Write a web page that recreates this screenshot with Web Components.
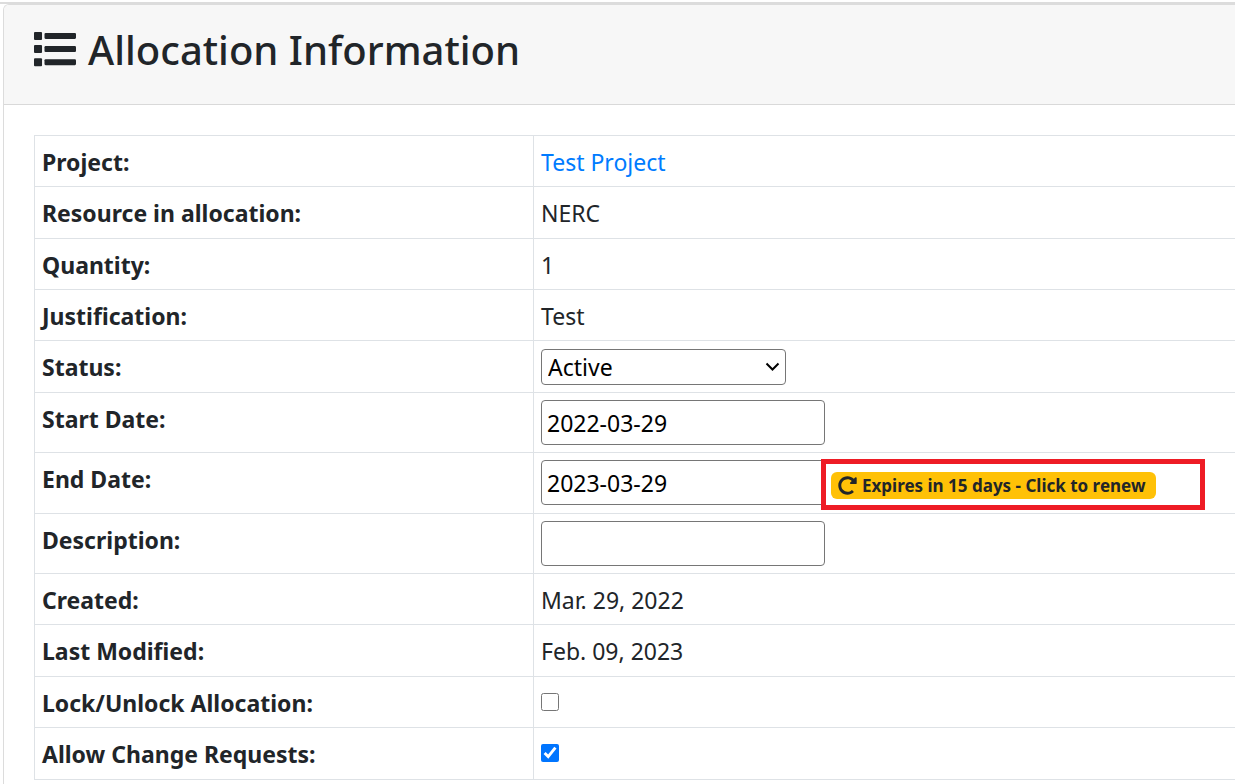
<!DOCTYPE html>
<html lang="en">
<head>
<meta charset="utf-8">
<title>Allocation Information</title>
<style>
  body {
    margin: 0;
    padding-top: 2px;
    background: #fff;
    color: #212529;
    font-family: "Noto Sans", "Open Sans", sans-serif;
    font-size: 23px;
    line-height: 38px;
    overflow-x: hidden;
  }
</style>
</head>
<body>
<info-card>
  <list-icon slot="icon"></list-icon>
  <span slot="title">Allocation Information</span>
  <allocation-details></allocation-details>
</info-card>

<script>
class ListIcon extends HTMLElement {
  constructor() {
    super();
    this.attachShadow({ mode: "open" }).innerHTML = `
      <style>
        :host { display: block; width: 42px; height: 42px; }
        svg { display: block; width: 100%; height: 100%; }
      </style>
      <svg viewBox="0 0 512 512" fill="currentColor" aria-hidden="true">
        <rect x="0" y="48" width="98" height="98" rx="12"/>
        <rect x="0" y="208" width="98" height="98" rx="12"/>
        <rect x="0" y="368" width="98" height="98" rx="12"/>
        <rect x="128" y="60" width="384" height="74" rx="14"/>
        <rect x="128" y="220" width="384" height="74" rx="14"/>
        <rect x="128" y="380" width="384" height="74" rx="14"/>
      </svg>`;
  }
}
customElements.define("list-icon", ListIcon);

class InfoCard extends HTMLElement {
  constructor() {
    super();
    this.attachShadow({ mode: "open" }).innerHTML = `
      <style>
        :host { display: block; border-top: 2px solid #dcdcdc; }
        section {
          margin-left: 3px;
          border: 1px solid #dcdcdc;
          border-right: 0;
          border-radius: 6px 0 0 0;
        }
        header {
          display: flex;
          gap: 12px;
          padding: 18px 30px 28px;
          background: #f7f7f7;
          border-bottom: 1px solid #d9d9d9;
          border-radius: 5px 0 0 0;
        }
        h2 {
          margin: 0;
          font-size: 40px;
          font-weight: 500;
          line-height: 53px;
        }
        .icon { padding-top: 5px; }
        .body { padding: 30px 0 30px 30px; }
      </style>
      <section>
        <header>
          <div class="icon"><slot name="icon"></slot></div>
          <h2><slot name="title"></slot></h2>
        </header>
        <div class="body"><slot></slot></div>
      </section>`;
  }
}
customElements.define("info-card", InfoCard);

class RenewBadge extends HTMLElement {
  constructor() {
    super();
    this.attachShadow({ mode: "open" }).innerHTML = `
      <style>
        :host { display: block; position: relative; }
        :host::after {
          content: "";
          position: absolute;
          top: -13px;
          right: -49px;
          bottom: -11px;
          left: -10px;
          border: 5px solid #ee1c25;
          pointer-events: none;
        }
        a {
          display: flex;
          align-items: center;
          gap: 5px;
          height: 27px;
          padding: 0 11px 0 7px;
          border-radius: 6px;
          background: #ffc107;
          color: #212529;
          font-size: 17px;
          font-weight: 700;
          line-height: 28px;
          text-decoration: none;
          white-space: nowrap;
        }
        svg { flex: none; width: 19px; height: 19px; }
      </style>
      <a href="#renew">
        <svg viewBox="0 0 512 512" fill="currentColor" aria-hidden="true"><path d="M256.455 8c66.269.119 126.437 26.233 170.859 68.685l35.715-35.715C478.149 25.851 504 36.559 504 57.941V192c0 13.255-10.745 24-24 24H345.941c-21.382 0-32.09-25.851-16.971-40.971l41.75-41.75c-30.864-28.899-70.801-44.907-113.23-45.273-92.398-.798-170.283 73.977-169.484 169.442C88.764 348.009 162.184 424 256 424c41.127 0 79.997-14.678 110.629-41.556 4.743-4.161 11.906-3.908 16.368.553l39.662 39.662c4.872 4.872 4.631 12.815-.482 17.433C378.202 479.813 319.926 504 256 504 119.034 504 8.001 392.967 8 256.002 7.999 119.193 119.646 7.755 256.455 8z"/></svg>
        <span><slot></slot></span>
      </a>`;
  }
}
customElements.define("renew-badge", RenewBadge);

class AllocationDetails extends HTMLElement {
  constructor() {
    super();
    this.attachShadow({ mode: "open" }).innerHTML = `
      <style>
        :host { display: block; }
        table {
          width: 100%;
          border-collapse: separate;
          border-spacing: 0;
          border: solid #dee2e6;
          border-width: 1px 0 0 1px;
          table-layout: fixed;
        }
        th, td {
          box-sizing: border-box;
          height: 51px;
          padding: 7px 7px 0;
          border-bottom: 1px solid #dee2e6;
          text-align: left;
          vertical-align: top;
        }
        th { width: 499px; border-right: 1px solid #dee2e6; font-weight: 700; }
        .tall > * { height: 60px; }
        tr:nth-child(5n) > *, tr:nth-child(5n + 2) > * { height: 52px; }
        .tall:nth-child(5n + 2) > * { height: 61px; }
        a { color: #007bff; text-decoration: none; }
        .field { display: flex; align-items: flex-start; gap: 6px; }
        .field renew-badge { margin-top: 12px; }
        input[type="text"], select {
          box-sizing: border-box;
          margin: 0;
          border: 1px solid #767676;
          border-radius: 4px;
          background: #fff;
          color: #000;
          font: inherit;
        }
        input[type="text"] { width: 284px; height: 45px; padding: 1px 5px 0; }
        .select { position: relative; width: 245px; height: 36px; margin-top: 1px; }
        select {
          appearance: none;
          display: block;
          width: 100%;
          height: 36px;
          padding: 0 32px 0 6px;
          line-height: 34px;
        }
        .select svg {
          position: absolute;
          top: 13px;
          right: 6px;
          width: 15px;
          height: 10px;
          pointer-events: none;
        }
        input[type="checkbox"] {
          display: block;
          width: 18px;
          height: 18px;
          margin: 9px 0 0;
          accent-color: #0075ff;
        }
      </style>
      <table>
        <tbody>
          <tr><th scope="row">Project:</th><td><a href="#project">Test Project</a></td></tr>
          <tr><th scope="row">Resource in allocation:</th><td>NERC</td></tr>
          <tr><th scope="row">Quantity:</th><td>1</td></tr>
          <tr><th scope="row">Justification:</th><td>Test</td></tr>
          <tr>
            <th scope="row"><label for="status">Status:</label></th>
            <td><div class="select">
              <select id="status"><option>Active</option><option>Expired</option></select>
              <svg viewBox="0 0 15 10" fill="none" stroke="#000" stroke-width="2" aria-hidden="true"><path d="M1.5 1.5l6 6 6-6"/></svg>
            </div></td>
          </tr>
          <tr class="tall">
            <th scope="row"><label for="start">Start Date:</label></th>
            <td><input type="text" id="start" value="2022-03-29"></td>
          </tr>
          <tr class="tall">
            <th scope="row"><label for="end">End Date:</label></th>
            <td><div class="field">
              <input type="text" id="end" value="2023-03-29">
              <renew-badge>Expires in 15 days - Click to renew</renew-badge>
            </div></td>
          </tr>
          <tr class="tall">
            <th scope="row"><label for="description">Description:</label></th>
            <td><input type="text" id="description"></td>
          </tr>
          <tr><th scope="row">Created:</th><td>Mar. 29, 2022</td></tr>
          <tr><th scope="row">Last Modified:</th><td>Feb. 09, 2023</td></tr>
          <tr>
            <th scope="row"><label for="lock">Lock/Unlock Allocation:</label></th>
            <td><input type="checkbox" id="lock"></td>
          </tr>
          <tr>
            <th scope="row"><label for="changes">Allow Change Requests:</label></th>
            <td><input type="checkbox" id="changes" checked></td>
          </tr>
        </tbody>
      </table>`;
  }
}
customElements.define("allocation-details", AllocationDetails);
</script>
</body>
</html>
